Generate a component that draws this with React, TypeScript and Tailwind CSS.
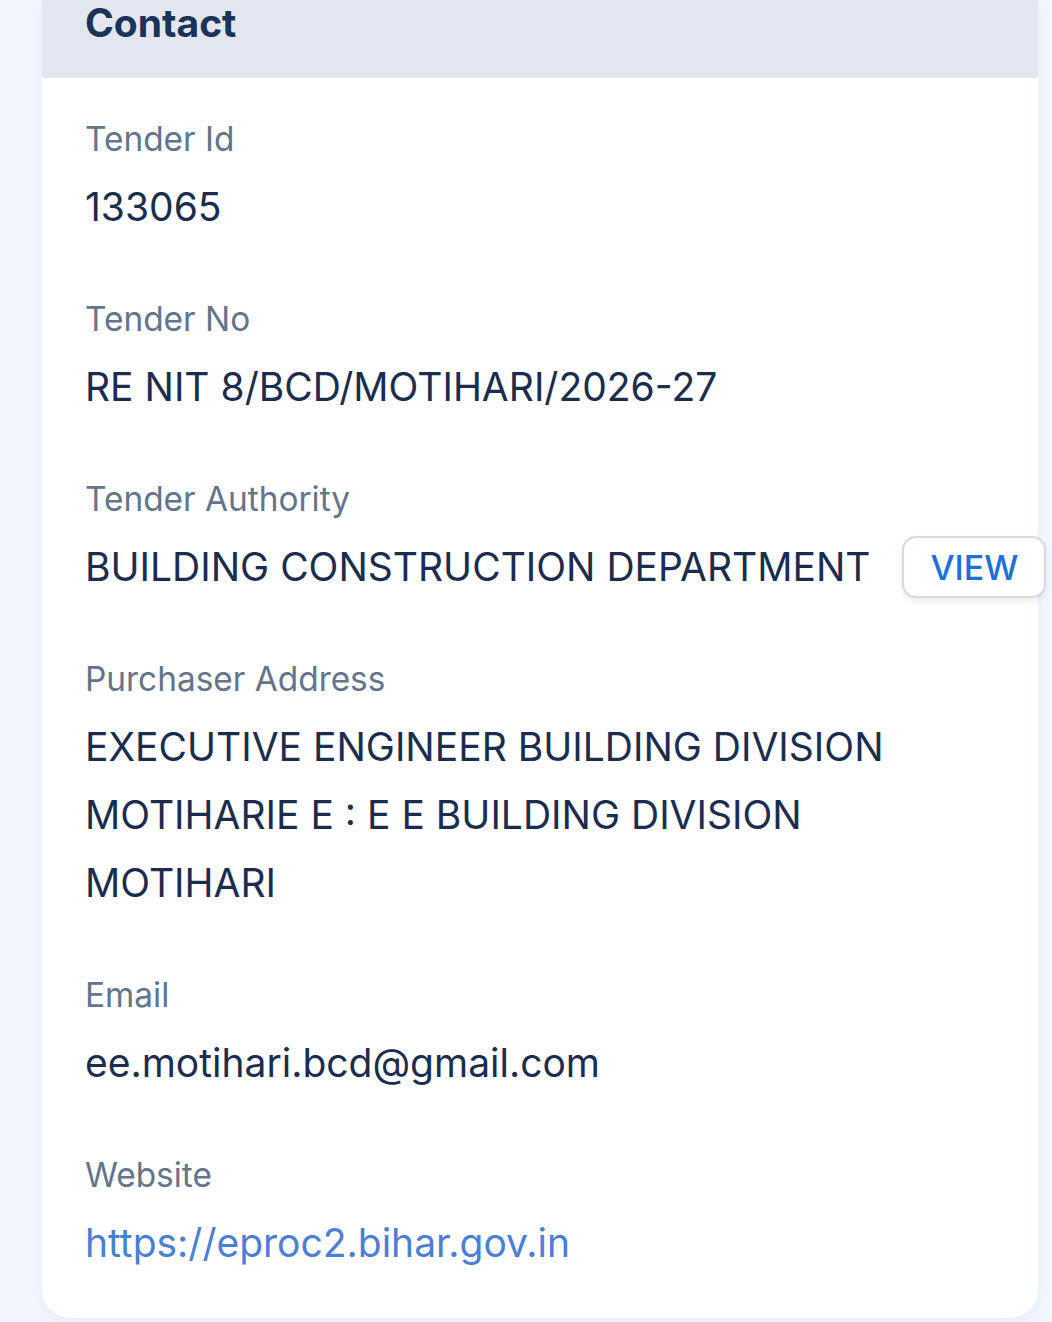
const fields = [
  { label: 'Tender Id', value: ['133065'] },
  { label: 'Tender No', value: ['RE NIT 8/BCD/MOTIHARI/2026-27'] },
  { label: 'Tender Authority', value: ['BUILDING CONSTRUCTION DEPARTMENT'], action: 'VIEW' },
  {
    label: 'Purchaser Address',
    value: ['EXECUTIVE ENGINEER BUILDING DIVISION', 'MOTIHARIE E : E E BUILDING DIVISION', 'MOTIHARI'],
  },
  { label: 'Email', value: ['ee.motihari.bcd@gmail.com'] },
  { label: 'Website', value: ['https://eproc2.bihar.gov.in'], link: true },
];

export default function App() {
  return (
    <div
      className="min-h-[1322px] w-[1052px] bg-[#f1f5fd] pl-[42px] pr-[14px] pb-[4px]"
      style={{ fontFamily: 'Inter, "Noto Sans", sans-serif' }}
    >
      <div className="bg-white rounded-b-[28px] shadow-[0_4px_10px_rgba(30,50,90,0.04)]">
        <div className="h-[78px] bg-[#e1e6ef] pl-[43px]">
          <h2 className="pt-[3px] text-[39px] leading-[40px] font-bold text-[#1a3358]">Contact</h2>
        </div>

        <div className="flex flex-col gap-[44px] pl-[43px] pt-[27px] pb-[41px]">
          {fields.map((field) => (
            <div key={field.label}>
              <div className="text-[33.4px] leading-[68px] text-[#64748b]">{field.label}</div>
              {field.action ? (
                <div className="flex items-center gap-[32px] whitespace-nowrap">
                  <span className="text-[39px] leading-[68px] text-[#1b2d4f]">{field.value[0]}</span>
                  <button className="h-[62px] w-[144px] shrink-0 rounded-[14px] border-2 border-[#d6d9de] bg-white text-[34px] font-medium text-[#1e6fd9] shadow-[0_3px_6px_rgba(0,0,0,0.08)]">
                    {field.action}
                  </button>
                </div>
              ) : (
                field.value.map((line) => (
                  <div
                    key={line}
                    className={`text-[39px] leading-[68px] ${field.link ? 'text-[#4a7fd6]' : 'text-[#1b2d4f]'}`}
                  >
                    {line}
                  </div>
                ))
              )}
            </div>
          ))}
        </div>
      </div>
    </div>
  );
}
